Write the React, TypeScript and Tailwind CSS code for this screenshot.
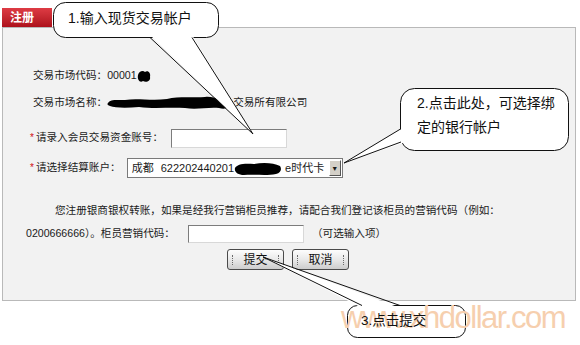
import React from 'react';

function Blob({ w, h, d }: { w: number; h: number; d: string }) {
  return (
    <svg width={w} height={h} viewBox={`0 0 ${w} ${h}`} className="shrink-0">
      <path d={d} fill="#000" />
    </svg>
  );
}

function GripButton({ label }: { label: string }) {
  return (
    <button className="relative flex h-[21px] w-[57px] items-center justify-center rounded-[3px] border border-[#4a4a4a] bg-gradient-to-b from-[#fdfdfd] via-[#e9e9e9] to-[#cdcdcd] text-[12px] text-[#111]">
      <span className="absolute left-[4px] top-[5px] h-[10px] border-l border-dotted border-[#6a6a6a]" />
      {label}
      <span className="absolute right-[4px] top-[5px] h-[10px] border-l border-dotted border-[#6a6a6a]" />
    </button>
  );
}

function Star() {
  return <span className="mr-[2px] text-[10px] leading-none text-[#d01010]">*</span>;
}

function Callouts() {
  return (
    <>
      <svg width="580" height="345" className="pointer-events-none absolute left-0 top-0">
        {/* bubble 1 */}
        <rect x="53.5" y="2.5" width="165" height="35" rx="12" fill="#fff" stroke="#111" />
        <polygon points="150,35 192,35 253,134" fill="#fff" />
        <line x1="150" y1="37.5" x2="253" y2="134" stroke="#111" />
        <line x1="192" y1="37.5" x2="253" y2="134" stroke="#111" />
        {/* bubble 2 */}
        <rect x="400.5" y="88.5" width="168" height="62" rx="14" fill="#fff" stroke="#111" />
        <polygon points="403,128 403,143 344,163" fill="#fff" />
        <line x1="400.5" y1="129" x2="344" y2="163" stroke="#111" />
        <line x1="401" y1="142" x2="344" y2="163" stroke="#111" />
        {/* bubble 3 */}
        <rect x="347.5" y="305.5" width="118" height="32" rx="10" fill="#fff" stroke="#111" />
        <polygon points="362,308 400,308 263,257" fill="#fff" />
        <line x1="362" y1="305.5" x2="263" y2="257" stroke="#111" />
        <line x1="400" y1="305.5" x2="263" y2="257" stroke="#111" />
      </svg>
      <div className="pointer-events-none absolute left-[341px] top-[302px] font-['Liberation_Sans',sans-serif] text-[31px] leading-[31px] tracking-[-1.5px] text-[#f6cfae]">
        www.xhdollar.com
      </div>
      <div className="absolute left-[68px] top-[9px] text-[14px] leading-[18px] text-[#111]">1.输入现货交易帐户</div>
      <div className="absolute left-[417px] top-[91px] text-[14px] leading-[24px] text-[#111]">
        <div>2.点击此处，可选择绑</div>
        <div>定的银行帐户</div>
      </div>
      <div className="absolute left-[361px] top-[312px] text-[13.5px] leading-[18px] text-[#111]">3.点击提交</div>
    </>
  );
}

export default function App() {
  return (
    <div className="relative h-[345px] w-[580px] overflow-hidden bg-white font-['Liberation_Sans','Noto_Sans_CJK_SC',sans-serif] text-[#1a1a1a]">
      <div className="pl-[2px] pt-[8px]">
        <div className="flex h-[19px] w-[50px] items-center bg-gradient-to-b from-[#de3b44] to-[#ad101b] pl-[8px] text-[12px] font-bold text-white">
          注册
        </div>
        <div className="h-[274px] w-[574px] border border-[#b9b9b9] bg-[#f2f2f2] text-[10.6px]">
          <div className="ml-[30px] mt-[38px] flex h-[20px] items-center">
            <span>交易市场代码：00001</span>
            <Blob w={14} h={14} d="M1,6 C2,2 6,1 8,3 C11,1 14,4 13,8 C14,12 9,14 6,12 C3,14 0,11 1,6 Z" />
          </div>
          <div className="ml-[30px] mt-[7px] flex h-[20px] items-center">
            <span>交易市场名称：</span>
            <Blob
              w={124}
              h={16}
              d="M1,8 C3,4 10,5 18,5 C30,3 45,6 60,4 C72,1 88,3 98,2 C108,1 114,6 120,9 C124,12 119,15 112,13 C100,12 90,15 78,13 C62,12 48,14 32,12 C20,13 8,13 3,11 C0,10 0,9 1,8 Z"
            />
            <span className="ml-[2px]">交易所有限公司</span>
          </div>
          <div className="ml-[27px] mt-[15px] flex h-[20px] items-center">
            <Star />
            <span>请录入会员交易资金账号：</span>
            <span className="ml-[8px] h-[19px] w-[116px] border border-b-[#d8d8d8] border-l-[#7c7c7c] border-r-[#d8d8d8] border-t-[#7c7c7c] bg-white" />
          </div>
          <div className="ml-[27px] mt-[10px] flex h-[20px] items-center">
            <Star />
            <span>请选择结算账户：</span>
            <div className="ml-[6px] flex h-[20px] w-[216px] items-center border border-[#7a7a7a] bg-white pl-[4px] text-[11px]">
              <span>成都</span>
              <span className="ml-[7px]">622202440201</span>
              <Blob
                w={48}
                h={15}
                d="M1,7 C3,3 10,2 20,3 C30,1 40,2 46,5 C48,8 47,12 42,13 C32,15 20,13 10,14 C4,14 0,11 1,7 Z"
              />
              <span className="ml-[3px]">e时代卡</span>
              <span className="ml-auto mr-[1px] flex h-[16px] w-[12px] items-center justify-center border border-b-[#555] border-l-[#fff] border-r-[#555] border-t-[#fff] bg-[#d4d0c8] text-[7px] leading-none">
                ▼
              </span>
            </div>
          </div>
          <div className="ml-[23px] mt-[21px] leading-[23px]">
            <div className="pl-[29px]">
              您注册银商银权转账，如果是经我行营销柜员推荐，请配合我们登记该柜员的营销代码（例如：
            </div>
            <div className="flex h-[23px] items-center">
              <span>0200666666）。柜员营销代码：</span>
              <span className="ml-[13px] h-[18px] w-[116px] border border-b-[#d8d8d8] border-l-[#7c7c7c] border-r-[#d8d8d8] border-t-[#7c7c7c] bg-white" />
              <span className="ml-[8px]">（可选输入项）</span>
            </div>
          </div>
          <div className="ml-[224px] mt-[4px] flex gap-[8px]">
            <GripButton label="提交" />
            <GripButton label="取消" />
          </div>
        </div>
      </div>
      <Callouts />
    </div>
  );
}
